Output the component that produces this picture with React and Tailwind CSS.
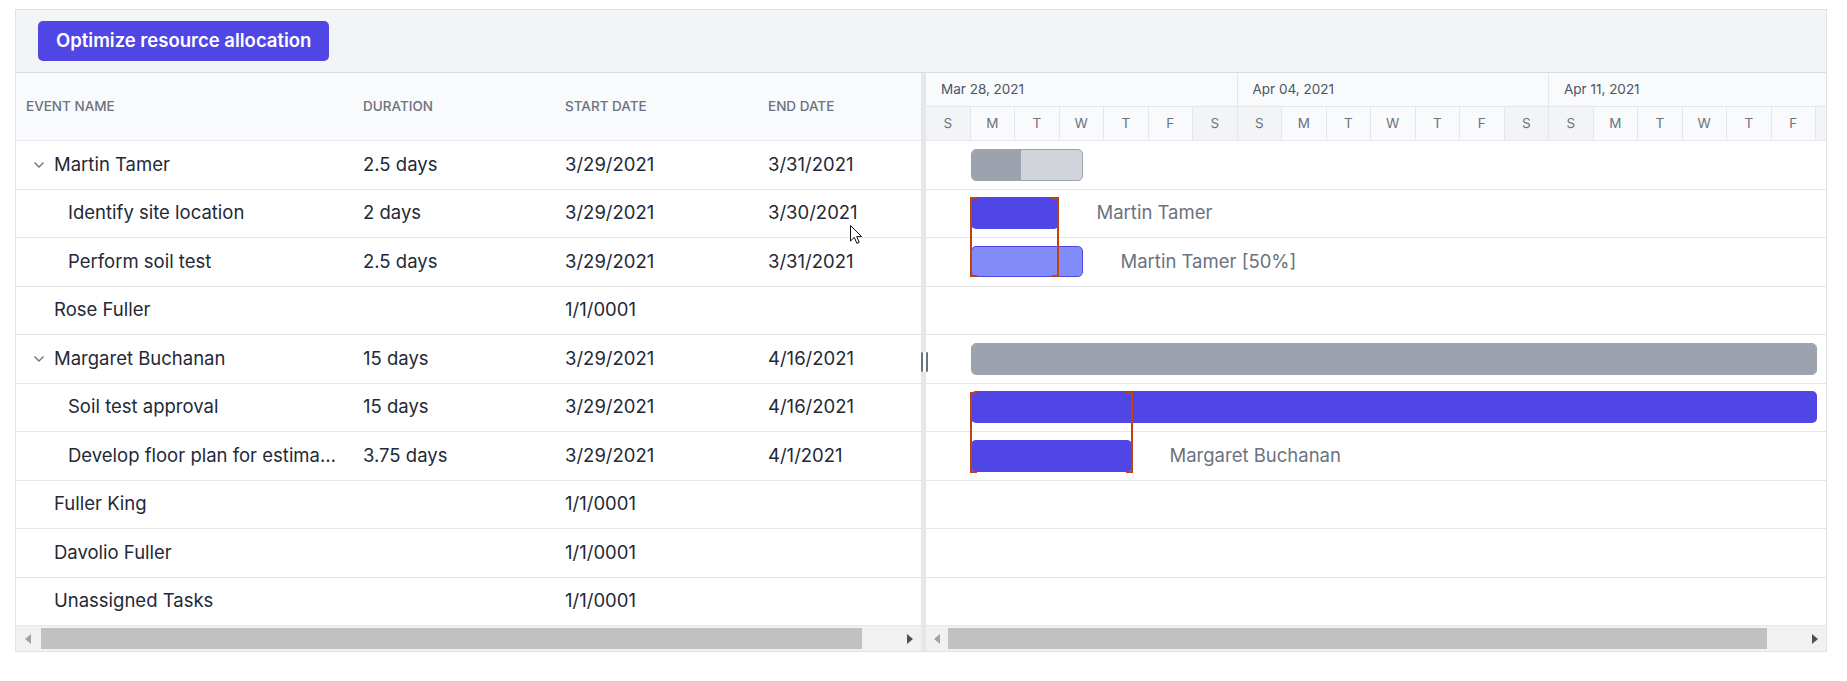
import React from 'react';

const DAY = 44.5;

const rows = [
  { name: 'Martin Tamer', duration: '2.5 days', start: '3/29/2021', end: '3/31/2021', level: 0, toggle: true,
    bar: { kind: 'parent', width: 112, progress: 45 } },
  { name: 'Identify site location', duration: '2 days', start: '3/29/2021', end: '3/30/2021', level: 1,
    bar: { kind: 'task', width: 88 }, label: 'Martin Tamer' },
  { name: 'Perform soil test', duration: '2.5 days', start: '3/29/2021', end: '3/31/2021', level: 1,
    bar: { kind: 'light', width: 112 }, label: 'Martin Tamer [50%]' },
  { name: 'Rose Fuller', start: '1/1/0001', level: 0 },
  { name: 'Margaret Buchanan', duration: '15 days', start: '3/29/2021', end: '4/16/2021', level: 0, toggle: true,
    bar: { kind: 'parent', width: 846, progress: 100 } },
  { name: 'Soil test approval', duration: '15 days', start: '3/29/2021', end: '4/16/2021', level: 1,
    bar: { kind: 'task', width: 846 } },
  { name: 'Develop floor plan for estimation', duration: '3.75 days', start: '3/29/2021', end: '4/1/2021', level: 1,
    bar: { kind: 'task', width: 161 }, label: 'Margaret Buchanan' },
  { name: 'Fuller King', start: '1/1/0001', level: 0 },
  { name: 'Davolio Fuller', start: '1/1/0001', level: 0 },
  { name: 'Unassigned Tasks', start: '1/1/0001', level: 0 },
];

const weeks = ['Mar 28, 2021', 'Apr 04, 2021', 'Apr 11, 2021'];
const dayLetters = ['S', 'M', 'T', 'W', 'T', 'F', 'S'];

// overallocation markers (top/height relative to timeline body)
const markers = [
  { top: 56, height: 80, width: 89 },
  { top: 251, height: 81, width: 163 },
];

const Chevron = () => (
  <svg width="12" height="8" viewBox="0 0 12 8" fill="none">
    <path d="M1.5 1.5L6 6L10.5 1.5" stroke="#6b7280" strokeWidth="1.4" />
  </svg>
);

const Arrow = ({ dir, dim }) => (
  <svg width="6" height="10" viewBox="0 0 6 10">
    {dir === 'left'
      ? <path d="M6 0V10L0 5Z" fill={dim ? '#a3a3a3' : '#505050'} />
      : <path d="M0 0V10L6 5Z" fill={dim ? '#a3a3a3' : '#505050'} />}
  </svg>
);

const Bar = ({ bar }) => {
  const style = { left: DAY, width: bar.width };
  if (bar.kind === 'parent') {
    return (
      <div className="absolute h-[32px] rounded-[5px] border border-[#9ca3af] bg-[#d1d5db] overflow-hidden" style={style}>
        <div className="h-full bg-[#9ca3af]" style={{ width: `${bar.progress}%` }} />
      </div>
    );
  }
  if (bar.kind === 'light') {
    return <div className="absolute h-[31px] rounded-[5px] border border-[#4f46e5] bg-[#818cf8]" style={style} />;
  }
  return <div className="absolute h-[32px] rounded-[5px] bg-[#4f46e5]" style={style} />;
};

const Marker = ({ m }) => (
  <div className="absolute border-x-2 border-[#c2410c]" style={{ left: DAY - 1, top: m.top, width: m.width, height: m.height }}>
    <div className="absolute left-0 top-0 w-[5px] h-[2px] bg-[#c2410c]" />
    <div className="absolute right-0 top-0 w-[5px] h-[2px] bg-[#c2410c]" />
    <div className="absolute left-0 bottom-0 w-[5px] h-[2px] bg-[#c2410c]" />
    <div className="absolute right-0 bottom-0 w-[5px] h-[2px] bg-[#c2410c]" />
  </div>
);

export default function App() {
  return (
    <div className="relative w-[1847px] h-[681px] bg-white pt-[9px] pl-[15px] font-['Inter',sans-serif]">
      <div className="w-[1812px] h-[643px] border border-[#e0e2e6] flex flex-col">
        {/* Toolbar */}
        <div className="h-[63px] shrink-0 flex items-center pl-[22px] bg-[#f3f4f6] border-b border-[#d9dce1]">
          <button className="h-[40px] px-[18px] rounded-[5px] bg-[#4f46e5] text-white text-[18.5px] font-semibold">
            Optimize resource allocation
          </button>
        </div>

        <div className="flex flex-1 min-h-0">
          {/* Grid */}
          <div className="w-[905px] shrink-0 flex flex-col">
            <div className="h-[68px] shrink-0 flex items-center bg-[#f9fafb] border-b border-[#e5e7eb] text-[13.5px] font-medium text-[#6b7280] uppercase">
              <div className="w-[336px] pl-[10px]">Event Name</div>
              <div className="w-[202px] pl-[11px]">Duration</div>
              <div className="w-[203px] pl-[11px]">Start Date</div>
              <div className="flex-1 pl-[11px]">End Date</div>
            </div>
            {rows.map((r, i) => (
              <div key={i} className="h-[48.5px] shrink-0 flex items-center border-b border-[#e5e7eb] text-[18.5px] text-[#1f2937]">
                <div className="w-[336px] pl-[10px] flex items-center min-w-0">
                  <div className="w-[28px] shrink-0 flex justify-center pr-[2px]">
                    {r.toggle && <Chevron />}
                  </div>
                  <div className={`truncate pr-[12px] ${r.level === 1 ? 'pl-[14px]' : ''}`}>{r.name}</div>
                </div>
                <div className="w-[202px] pl-[11px]">{r.duration}</div>
                <div className="w-[203px] pl-[11px]">{r.start}</div>
                <div className="flex-1 pl-[11px]">{r.end}</div>
              </div>
            ))}
            <div className="flex-1 flex items-center bg-[#f1f1f1] pl-[9px] pr-[8px]">
              <Arrow dir="left" dim />
              <div className="ml-[10px] w-[821px] h-[21px] bg-[#c1c1c1]" />
              <div className="ml-auto"><Arrow dir="right" /></div>
            </div>
          </div>

          {/* Splitter */}
          <div className="relative w-[5px] shrink-0 bg-[#e5e7eb]">
            <div className="absolute left-[-2px] top-[279px] w-[10px] h-[20px] bg-white flex justify-center gap-[3px]">
              <div className="w-[2px] h-full rounded-full bg-[#6b7280]" />
              <div className="w-[2px] h-full rounded-full bg-[#6b7280]" />
            </div>
          </div>

          {/* Timeline */}
          <div className="flex-1 min-w-0 flex flex-col overflow-hidden">
            <div className="h-[68px] shrink-0 bg-[#f9fafb] border-b border-[#e5e7eb] flex flex-col">
              <div className="h-[34px] shrink-0 flex border-b border-[#e5e7eb]">
                {weeks.map((w) => (
                  <div key={w} className="w-[311.5px] shrink-0 border-r border-[#e5e7eb] pl-[15px] flex items-center text-[13.5px] text-[#4b5563]">
                    {w}
                  </div>
                ))}
              </div>
              <div className="flex-1 flex">
                {weeks.flatMap((w) => dayLetters.map((d, j) => (
                  <div key={w + j}
                    className={`w-[44.5px] shrink-0 border-r border-[#e5e7eb] flex items-center justify-center text-[13.5px] text-[#6b7280] ${j === 0 || j === 6 ? 'bg-[#f3f4f6]' : ''}`}>
                    {d}
                  </div>
                )))}
              </div>
            </div>

            <div className="relative">
              {rows.map((r, i) => (
                <div key={i} className="relative h-[48.5px] flex items-center border-b border-[#e5e7eb]">
                  {r.bar && <Bar bar={r.bar} />}
                  {r.label && (
                    <div className="absolute text-[18.5px] text-[#6b7280] whitespace-nowrap" style={{ left: DAY + r.bar.width + 38 }}>
                      {r.label}
                    </div>
                  )}
                </div>
              ))}
              {markers.map((m, i) => <Marker key={i} m={m} />)}
            </div>

            <div className="flex-1 flex items-center bg-[#f1f1f1] pl-[8px] pr-[8px]">
              <Arrow dir="left" dim />
              <div className="ml-[8px] w-[819px] h-[21px] bg-[#c1c1c1]" />
              <div className="ml-auto"><Arrow dir="right" /></div>
            </div>
          </div>
        </div>
      </div>

      {/* mouse pointer */}
      <svg className="absolute left-[850px] top-[225px]" width="13" height="20" viewBox="0 0 13 20">
        <path d="M0.5 0.5V16L4.3 12.4L6.8 18.3L9.2 17.3L6.7 11.6H11.6Z" fill="white" stroke="#111" strokeWidth="1" />
      </svg>
    </div>
  );
}
